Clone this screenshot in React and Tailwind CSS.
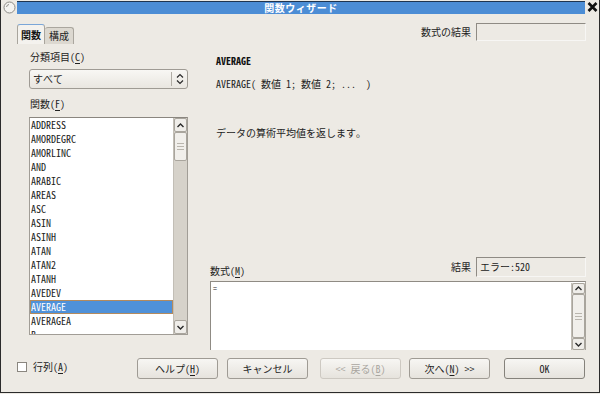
const FONT = "font-['Noto_Sans_Mono_CJK_JP','Noto_Sans_CJK_JP',sans-serif]";

const FUNCS = [
  'ADDRESS', 'AMORDEGRC', 'AMORLINC', 'AND', 'ARABIC', 'AREAS', 'ASC', 'ASIN',
  'ASINH', 'ATAN', 'ATAN2', 'ATANH', 'AVEDEV', 'AVERAGE', 'AVERAGEA', 'B'
];

// small arrow glyph for scrollbar buttons
function Arrow({ up }) {
  return (
    <svg width="7" height="5" viewBox="0 0 7 5">
      <path
        d={up ? 'M0.5 4 L3.5 1 L6.5 4' : 'M0.5 1 L3.5 4 L6.5 1'}
        fill="none"
        stroke="#2a2a2a"
        strokeWidth="1.4"
      />
    </svg>
  );
}

function Grip() {
  return (
    <div className="flex flex-col gap-[2px]">
      <div className="w-[7px] h-px bg-[#b9b5ad]" />
      <div className="w-[7px] h-px bg-[#b9b5ad]" />
      <div className="w-[7px] h-px bg-[#b9b5ad]" />
    </div>
  );
}

// vertical scrollbar used by list + formula box
function ScrollBar({ thumbTop = 0, thumbH = 28, upH = 13, downH = 13 }) {
  return (
    <div className="w-[14px] h-full flex flex-col bg-[#d6d2ca] border-l border-[#c2beb6]">
      <div
        className="flex items-center justify-center border border-[#a9a59d] bg-[#efede9] rounded-[2px]"
        style={{ height: upH }}
      >
        <Arrow up />
      </div>
      <div className="flex-1 relative">
        <div
          className="absolute left-0 right-0 flex items-center justify-center border border-[#a9a59d] bg-[#f1efeb] rounded-[2px]"
          style={{ top: thumbTop, height: thumbH }}
        >
          <Grip />
        </div>
      </div>
      <div
        className="flex items-center justify-center border border-[#a9a59d] bg-[#efede9] rounded-[2px]"
        style={{ height: downH }}
      >
        <Arrow />
      </div>
    </div>
  );
}

function Btn({ children, disabled, def, className = '' }) {
  return (
    <div
      className={
        'w-[81px] h-[21px] flex items-center justify-center rounded-[3px] border text-[10px] bg-gradient-to-b from-[#f7f6f3] to-[#e6e3dd] ' +
        (disabled
          ? 'border-[#cdc9c2] text-[#a9a6a0] '
          : def
          ? 'border-[#85827b] text-[#1e1e1e] '
          : 'border-[#9f9b94] text-[#1e1e1e] ') +
        className
      }
    >
      {children}
    </div>
  );
}

function U({ children }) {
  return <span className="underline underline-offset-2">{children}</span>;
}

export default function App() {
  return (
    <div className={'w-[600px] h-[394px] bg-[#edeae4] text-[#222] text-[10px] leading-[14px] ' + FONT}>
      <div className="h-[393px] flex flex-col border-x border-b border-[#2b2b2b]">
        {/* title bar */}
        <div className="h-[15px] flex items-start">
          <div className="w-[16px] h-[14px] flex items-center justify-center">
            <svg width="13" height="13" viewBox="0 0 13 13">
              <circle cx="6.5" cy="6.5" r="5.5" fill="#f4f3f0" stroke="#8c8a86" />
              <path d="M3.5 6 A3 3 0 0 1 6 3.5" fill="none" stroke="#8c8a86" strokeWidth="1" />
            </svg>
          </div>
          <div className="w-[568px] h-[13px] mt-[1px] bg-[#4c8dd5] border-t border-[#1f3550] flex items-center justify-center">
            <span className="text-white font-bold text-[10px] leading-[12px] tracking-[0.5px]">関数ウィザード</span>
          </div>
          <div className="flex-1 flex justify-center pt-[2px]">
            <svg width="11" height="10" viewBox="0 0 11 10">
              <path d="M1.5 1 L9.5 9 M9.5 1 L1.5 9" stroke="#111" strokeWidth="2.6" />
            </svg>
          </div>
        </div>

        {/* main */}
        <div className="flex">
          {/* left column */}
          <div className="ml-[16px] w-[171px] flex flex-col">
            <div className="mt-[9px] flex items-end h-[20px]">
              <div className="w-[28px] h-[20px] flex items-center justify-center font-bold text-[#111] bg-[#f4f2ee] border border-b-0 border-[#a9a59d] border-t-[#7aa6d8] rounded-t-[3px]">
                関数
              </div>
              <div className="w-[29px] h-[17px] flex items-center justify-center bg-[#dcd8d0] border border-b-0 border-l-0 border-[#aaa69e] rounded-t-[3px]">
                構成
              </div>
            </div>
            <div className="ml-[12px] flex flex-col">
              <div className="mt-[6px] ml-[1px]">
                分類項目(<U>C</U>)
              </div>
              <div className="mt-[5px] h-[20px] w-[159px] flex items-center rounded-[3px] border border-[#9f9b94] bg-gradient-to-b from-[#f8f7f4] to-[#e9e6e0]">
                <span className="pl-[3px] flex-1">すべて</span>
                <div className="w-px h-[14px] bg-[#b0aca4]" />
                <div className="w-[15px] flex justify-center">
                  <svg width="8" height="12" viewBox="0 0 8 12">
                    <path d="M1 4.5 L4 1.5 L7 4.5 M1 7.5 L4 10.5 L7 7.5" fill="none" stroke="#2a2a2a" strokeWidth="1.2" />
                  </svg>
                </div>
              </div>
              <div className="mt-[8px] ml-[1px]">
                関数(<U>F</U>)
              </div>
              <div className="mt-[6px] h-[218px] w-[159px] flex border border-[#a19d96] border-t-[#8a867f] bg-white">
                <div className="flex-1 overflow-hidden">
                  {FUNCS.map((f) => (
                    <div
                      key={f}
                      className={
                        'h-[14px] leading-[13px] pl-[1px] ' +
                        (f === 'AVERAGE' ? 'bg-[#4f91d9] text-white outline outline-1 -outline-offset-1 outline-[#b38a5e]' : '')
                      }
                    >
                      {f}
                    </div>
                  ))}
                </div>
                <ScrollBar thumbTop={0} thumbH={29} upH={14} downH={14} />
              </div>
            </div>
          </div>

          {/* right column */}
          <div className="ml-[22px] w-[376px] flex flex-col">
            <div className="mt-[8px] flex items-center justify-end">
              <span>数式の結果</span>
              <div className="ml-[5px] w-[110px] h-[18px] border border-[#8f8b84] border-r-[#f7f6f4] border-b-[#f7f6f4] bg-[#edeae4]" />
            </div>
            <div className="mt-[13px] ml-[6px] font-bold text-[#111]">AVERAGE</div>
            <div className="mt-[9px] ml-[6px] whitespace-pre">AVERAGE( 数値 1; 数値 2; ...  )</div>
            <div className="mt-[35px] ml-[6px]">データの算術平均値を返します。</div>
            <div className="mt-[117px] flex items-end">
              <span className="flex-1 mb-[-1px]">
                数式(<U>M</U>)
              </span>
              <span className="self-center mr-[5px] mt-[-1px]">結果</span>
              <div className="w-[110px] h-[20px] pl-[3px] flex items-center border border-[#8f8b84] border-r-[#f7f6f4] border-b-[#f7f6f4]">
                エラー:520
              </div>
            </div>
            <div className="mt-[4px] h-[69px] flex bg-white border border-b-0 border-[#8f8b84] border-r-[#a9a59d]">
              <div className="flex-1 pl-[2px] leading-[12px] text-[8px]">=</div>
              <div className="pt-px h-full">
                <ScrollBar thumbTop={0} thumbH={44} upH={11} downH={12} />
              </div>
            </div>
          </div>
        </div>

        {/* bottom row */}
        <div className="mt-[8px] flex items-start">
          <div className="ml-[16px] w-[120px] mt-[2px] flex items-center">
            <div className="w-[10px] h-[10px] border border-[#8a867f] bg-white" />
            <span className="ml-[6px]">
              行列(<U>A</U>)
            </span>
          </div>
          <Btn>
            ヘルプ(<U>H</U>)
          </Btn>
          <Btn className="ml-[9px]">キャンセル</Btn>
          <Btn className="ml-[12px]" disabled>
            {'<< 戻る('}
            <U>B</U>)
          </Btn>
          <Btn className="ml-[8px]">
            次へ(<U>N</U>){' >>'}
          </Btn>
          <Btn className="ml-[14px]" def>
            OK
          </Btn>
        </div>
      </div>
    </div>
  );
}
